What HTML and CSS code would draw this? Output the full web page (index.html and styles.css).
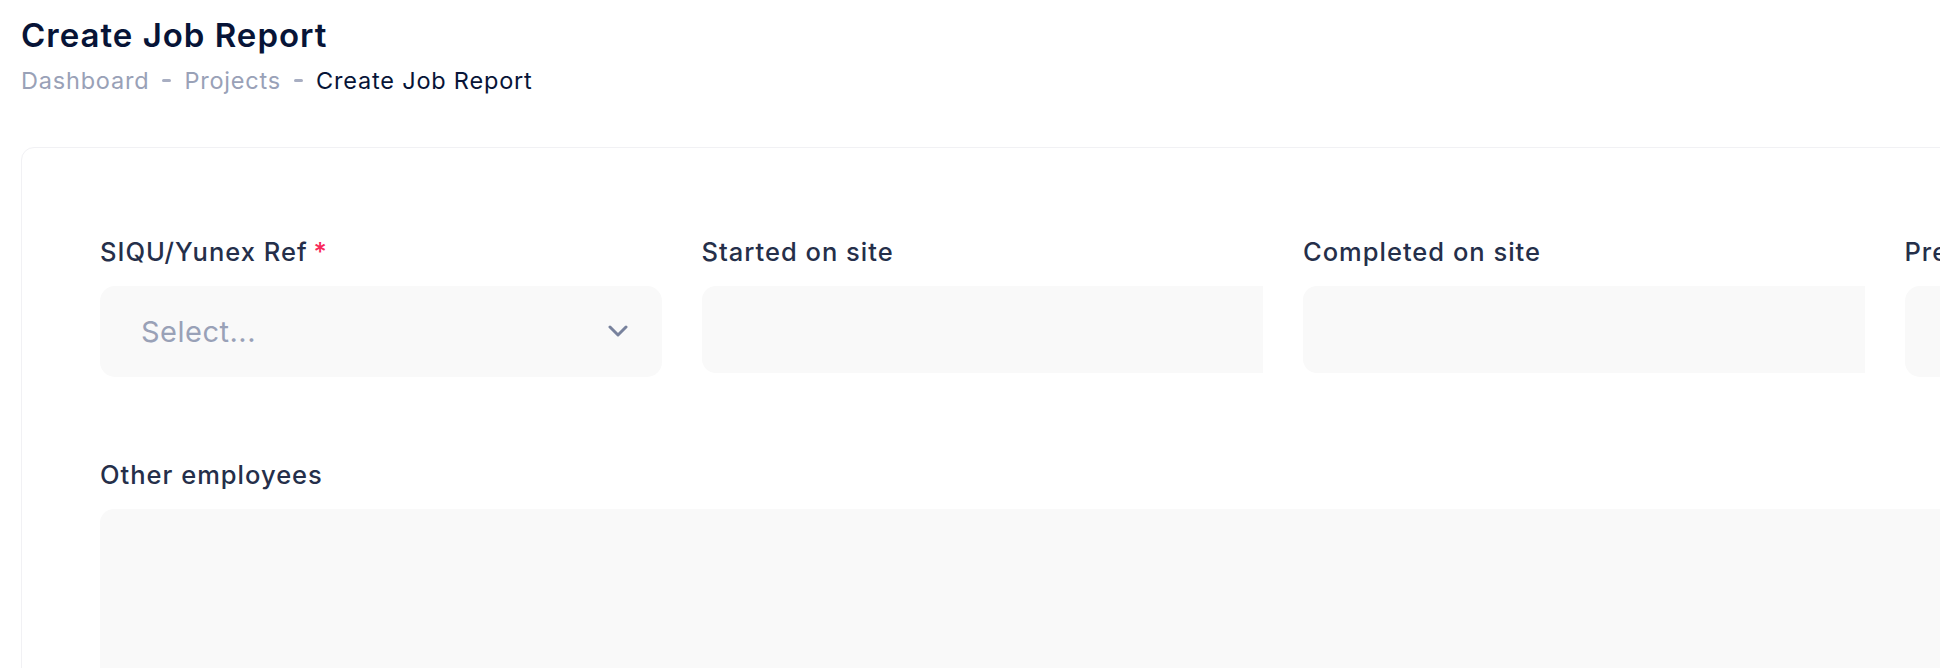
FILE: index.html
```html
<!DOCTYPE html>
<html lang="en">
	<head>
		<meta charset="UTF-8" />
		<meta name="viewport" content="width=device-width, initial-scale=1.0" />
		<title>Create Job Report</title>
		<link rel="stylesheet" href="styles.css">
	</head>
	<body>
		<div class="toolbar">
			<h1 class="page-title">Create Job Report</h1>
			<ul class="breadcrumb">
				<li class="crumb muted">Dashboard</li>
				<li class="bullet"></li>
				<li class="crumb muted">Projects</li>
				<li class="bullet"></li>
				<li class="crumb">Create Job Report</li>
			</ul>
		</div>

		<div class="card">
			<form class="form-grid">
				<div class="field">
					<label class="form-label required">SIQU/Yunex Ref</label>
					<div class="select">
						<span class="placeholder">Select...</span>
						<svg class="chevron" width="20" height="12" viewBox="0 0 20 12">
							<polyline points="2,2 10,10 18,2" fill="none" stroke="#78829d" stroke-width="3" stroke-linecap="round" stroke-linejoin="round" />
						</svg>
					</div>
				</div>
				<div class="field">
					<label class="form-label">Started on site</label>
					<input type="text" class="date-input" />
				</div>
				<div class="field">
					<label class="form-label">Completed on site</label>
					<input type="text" class="date-input" />
				</div>
				<div class="field">
					<label class="form-label">Previous visit</label>
					<div class="select">
						<span class="placeholder">Select...</span>
					</div>
				</div>
				<div class="field wide">
					<label class="form-label">Other employees</label>
					<textarea class="textarea"></textarea>
				</div>
			</form>
		</div>
	</body>
</html>
```

FILE: styles.css
```css
html,
body {
	overflow: hidden;
}
body {
	margin: 0;
	padding: 0 0 0 21px;
	font-family: Inter, "Noto Sans", sans-serif;
	background: #ffffff;
	color: #252f4a;
}
.toolbar {
	padding-top: 16px;
}
.page-title {
	margin: 0;
	font-size: 33px;
	line-height: 1.2;
	font-weight: 600;
	letter-spacing: 1px;
	color: #071437;
}
.breadcrumb {
	display: flex;
	align-items: center;
	list-style: none;
	margin: 7px 0 0;
	padding: 0;
	font-size: 23.5px;
	line-height: 1.5;
	letter-spacing: 0.8px;
	color: #071437;
}
.crumb.muted {
	color: #99a1b7;
}
.bullet {
	width: 9px;
	height: 3px;
	margin: 0 13px;
	border-radius: 2px;
	background: #a8aec2;
}
.card {
	width: 2520px;
	margin-top: 49px;
	padding: 86px 78px 60px;
	border: 1px solid #f1f1f4;
	border-radius: 13px;
	box-sizing: border-box;
}
.form-grid {
	display: grid;
	grid-template-columns: repeat(4, 561.5px);
	column-gap: 40px;
	row-gap: 80px;
	align-items: start;
}
.field.wide {
	grid-column: 1 / -1;
}
.form-label {
	display: block;
	margin-bottom: 16px;
	font-size: 25.5px;
	line-height: 36px;
	font-weight: 500;
	letter-spacing: 1px;
	color: #252f4a;
}
.form-label.required::after {
	content: "*";
	padding-left: 6px;
	color: #f8285a;
}
.select {
	display: flex;
	align-items: center;
	justify-content: space-between;
	height: 91px;
	padding: 0 34px 0 41px;
	box-sizing: border-box;
	border-radius: 15px;
	background: #f9f9f9;
}
.placeholder {
	font-size: 29px;
	letter-spacing: 0.5px;
	color: #99a1b7;
}
.date-input {
	display: block;
	width: 100%;
	height: 87px;
	box-sizing: border-box;
	border: none;
	outline: none;
	border-radius: 14px 0 0 14px;
	background: #f9f9f9;
}
.textarea {
	display: block;
	width: 100%;
	height: 260px;
	box-sizing: border-box;
	border: none;
	outline: none;
	resize: none;
	border-radius: 14px;
	background: #f9f9f9;
}
```
